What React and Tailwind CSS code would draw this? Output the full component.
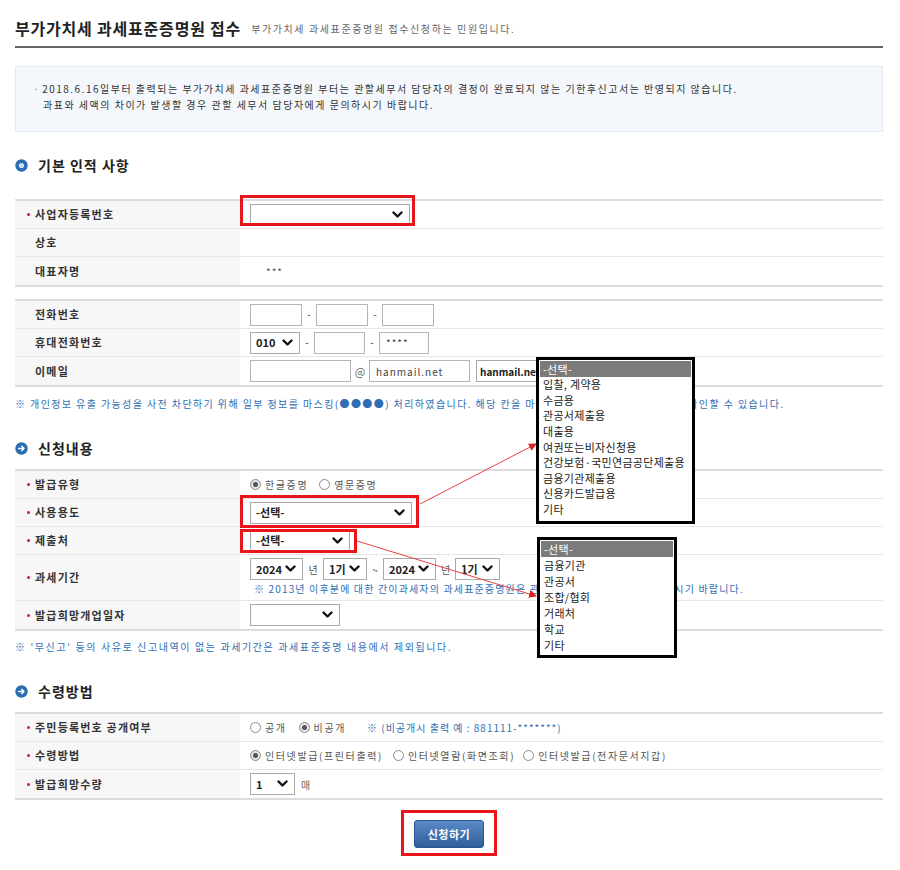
import React from "react";

const Chevron = () => (
  <svg width="11" height="8" viewBox="0 0 11 8" className="shrink-0">
    <path d="M1.5 1.5 L5.5 5.5 L9.5 1.5" fill="none" stroke="#111" strokeWidth="2.4" strokeLinecap="round" strokeLinejoin="round" />
  </svg>
);

function Select({ w, children }) {
  return (
    <div className={`${w} h-[22px] border border-[#a9a9a9] bg-white flex items-center justify-between pl-[5px] pr-[6px] shrink-0`}>
      <span className="text-[11px] font-bold text-[#222] whitespace-nowrap">{children}</span>
      <Chevron />
    </div>
  );
}

function Input({ w, children }) {
  return (
    <div className={`${w} h-[22px] border border-[#b5b5b5] bg-white flex items-center pl-[6px] shrink-0`}>
      <span className="text-[10px] text-[#444] tracking-[1px] whitespace-nowrap">{children}</span>
    </div>
  );
}

const Dash = () => <span className="w-[14px] text-center text-[11px] text-[#555] shrink-0">-</span>;

function Radio({ checked, label, gap = "mr-[8px]" }) {
  return (
    <span className={`flex items-center gap-[4px] ${gap}`}>
      <span className={`w-[11px] h-[11px] rounded-full border border-[#8a8a8a] flex items-center justify-center ${checked ? "bg-[#e6e6e6]" : "bg-white"}`}>
        {checked && <span className="w-[5px] h-[5px] rounded-full bg-[#555]" />}
      </span>
      <span className="text-[10px] text-[#555] tracking-[1.6px] whitespace-nowrap">{label}</span>
    </span>
  );
}

function Row({ label, req, children, last, tall }) {
  return (
    <div className={`flex ${tall ? "h-[46px]" : "h-[28px]"} ${last ? "" : "border-b border-[#e6e6e6]"}`}>
      <div className="w-[225px] shrink-0 bg-[#f7f7f7] flex items-center pl-[12px]">
        <span className={`w-[3px] h-[3px] rounded-full mr-[5px] ${req ? "bg-[#d9182a]" : ""}`} />
        <span className="text-[11px] font-bold text-[#333] tracking-[1.2px] whitespace-nowrap">{label}</span>
      </div>
      <div className="flex-1 flex items-center pl-[10px] bg-white">{children}</div>
    </div>
  );
}

function Table({ children, className = "" }) {
  return <div className={`border-t-2 border-b-2 border-[#dcdcdc] ${className}`}>{children}</div>;
}

function SectionTitle({ children, first }) {
  return (
    <div className="flex items-center h-[18px]">
      <svg width="13" height="13" viewBox="0 0 13 13" className="mr-[10px]">
        <circle cx="6.5" cy="6.5" r="6.2" fill="#2a6db2" />
        {first ? (
          <circle cx="6.5" cy="6.5" r="2.6" fill="#cfe0f3" />
        ) : (
          <path d="M3.5 6.5 H9 M6.8 4.3 L9 6.5 L6.8 8.7" fill="none" stroke="#fff" strokeWidth="1.4" strokeLinecap="round" strokeLinejoin="round" />
        )}
      </svg>
      <span className="text-[14px] font-bold text-[#222] tracking-[1px]">{children}</span>
    </div>
  );
}

const Note = ({ children, className = "tracking-[1.4px]" }) => (
  <div className={`text-[10px] text-[#2f6eb5] leading-[16px] whitespace-nowrap ${className}`}>{children}</div>
);

function Dropdown({ items, pos, itemH }) {
  return (
    <div className={`absolute ${pos} border-[3px] border-black bg-white overflow-hidden p-[1px]`}>
      {items.map((it, i) => (
        <div
          key={i}
          className={`${itemH} pl-[3px] flex items-center text-[11px] tracking-[0.3px] whitespace-nowrap ${i === 0 ? "bg-[#7b7b7b] text-white" : "text-[#222]"}`}
        >
          {it}
        </div>
      ))}
    </div>
  );
}

export default function App() {
  return (
    <div className="relative w-[900px] h-[870px] bg-white font-['Noto_Sans_CJK_KR','Noto_Sans',sans-serif] overflow-hidden">
      <div className="px-[15px] w-[898px]">
        {/* title */}
        <div className="pt-[18px] pb-[8px] border-b-2 border-[#666] flex items-end h-[48px]">
          <span className="text-[16px] font-bold text-[#222] tracking-[0.8px] leading-[20px]">부가가치세 과세표준증명원 접수</span>
          <span className="ml-[10px] text-[10px] text-[#666] tracking-[1.6px] leading-[18px]">부가가치세 과세표준증명원 접수신청하는 민원입니다.</span>
        </div>

        {/* info box */}
        <div className="mt-[18px] h-[66px] bg-[#f4f7fb] border border-[#e4eaf2] pl-[17px] pt-[14px]">
          <div className="text-[10px] text-[#333] tracking-[1.5px] leading-[16px] whitespace-nowrap">
            <span className="text-[#888] mr-[2px]">·</span>2018.6.16일부터 출력되는 부가가치세 과세표준증명원 부터는 관할세무서 담당자의 결정이 완료되지 않는 기한후신고서는 반영되지 않습니다.
          </div>
          <div className="text-[10px] text-[#333] tracking-[1.5px] leading-[16px] whitespace-nowrap pl-[10px]">
            과표와 세액의 차이가 발생할 경우 관할 세무서 담당자에게 문의하시기 바랍니다.
          </div>
        </div>

        {/* section 1 */}
        <div className="mt-[24px]">
          <SectionTitle first>기본 인적 사항</SectionTitle>
        </div>
        <Table className="mt-[25px]">
          <Row label="사업자등록번호" req>
            <Select w="w-[160px]"></Select>
          </Row>
          <Row label="상호"></Row>
          <Row label="대표자명" last>
            <span className="ml-[16px] text-[10px] text-[#555] tracking-[1px]">***</span>
          </Row>
        </Table>

        <Table className="mt-[12px]">
          <Row label="전화번호">
            <Input w="w-[52px]" />
            <Dash />
            <Input w="w-[52px]" />
            <Dash />
            <Input w="w-[52px]" />
          </Row>
          <Row label="휴대전화번호">
            <Select w="w-[50px]">010</Select>
            <Dash />
            <Input w="w-[51px]" />
            <Dash />
            <Input w="w-[50px]">****</Input>
          </Row>
          <Row label="이메일" last>
            <Input w="w-[101px]" />
            <span className="w-[18px] text-center text-[11px] text-[#666] shrink-0">@</span>
            <Input w="w-[101px]">hanmail.net</Input>
            <div className="ml-[6px] w-[90px] h-[22px] border border-[#a9a9a9] bg-white flex items-center pl-[3px]">
              <span className="text-[10px] font-bold text-[#222]">hanmail.net</span>
            </div>
          </Row>
        </Table>

        <Note className="mt-[9px] tracking-[1.4px]">
          ※ 개인정보 유출 가능성을 사전 차단하기 위해 일부 정보를 마스킹(●●●●) 처리하였습니다. 해당 칸을 마우스로 클릭하시면 원래 정보를 확인할 수 있습니다.
        </Note>

        {/* section 2 */}
        <div className="mt-[27px]">
          <SectionTitle>신청내용</SectionTitle>
        </div>
        <Table className="mt-[12px]">
          <Row label="발급유형" req>
            <Radio checked label="한글증명" gap="mr-[11px]" />
            <Radio label="영문증명" />
          </Row>
          <Row label="사용용도" req>
            <Select w="w-[162px]">-선택-</Select>
          </Row>
          <Row label="제출처" req>
            <Select w="w-[100px]">-선택-</Select>
          </Row>
          <Row label="과세기간" req tall>
            <div className="flex flex-col">
              <div className="flex items-center">
                <Select w="w-[53px]">2024</Select>
                <span className="w-[20px] text-center text-[10px] text-[#555]">년</span>
                <Select w="w-[44px]">1기</Select>
                <span className="w-[16px] text-center text-[10px] text-[#555]">~</span>
                <Select w="w-[53px]">2024</Select>
                <span className="w-[19px] text-center text-[10px] text-[#555]">년</span>
                <Select w="w-[45px]">1기</Select>
              </div>
              <Note className="pl-[4px] mt-[1px] tracking-[1.15px]">※ 2013년 이후분에 대한 간이과세자의 과세표준증명원은 관할 세무서 담당자에게 문의하시기 바랍니다.</Note>
            </div>
          </Row>
          <Row label="발급희망개업일자" req last>
            <Select w="w-[90px]"></Select>
          </Row>
        </Table>

        <Note className="mt-[8px] tracking-[1.6px]">※ '무신고' 등의 사유로 신고내역이 없는 과세기간은 과세표준증명 내용에서 제외됩니다.</Note>

        {/* section 3 */}
        <div className="mt-[27px]">
          <SectionTitle>수령방법</SectionTitle>
        </div>
        <Table className="mt-[12px]">
          <Row label="주민등록번호 공개여부" req>
            <Radio label="공개" gap="mr-[12px]" />
            <Radio checked label="비공개" gap="mr-[21px]" />
            <span className="text-[10px] text-[#2f6eb5] tracking-[1px] whitespace-nowrap">※ (비공개시 출력 예 : 881111-*******)</span>
          </Row>
          <Row label="수령방법" req>
            <Radio checked label="인터넷발급(프린터출력)" gap="mr-[10px]" />
            <Radio label="인터넷열람(화면조회)" gap="mr-[8px]" />
            <Radio label="인터넷발급(전자문서지갑)" />
          </Row>
          <Row label="발급희망수량" req last>
            <Select w="w-[45px]">1</Select>
            <span className="ml-[6px] text-[10px] text-[#666]">매</span>
          </Row>
        </Table>

        {/* button */}
        <div className="flex justify-center mt-[10px]">
          <div className="border-[3px] border-[#e8161b] px-[10px] pt-[7px] pb-[5px]">
            <button className="w-[70px] h-[28px] rounded-[3px] bg-gradient-to-b from-[#5b8ac6] to-[#2f5f9c] border border-[#2b5790] text-white text-[11px] font-bold tracking-[0.5px]">
              신청하기
            </button>
          </div>
        </div>
      </div>

      {/* annotation layer */}
      <div className="absolute left-[240px] top-[195px] w-[175px] h-[31px] border-[3px] border-[#e8161b]" />
      <div className="absolute left-[240px] top-[495px] w-[179px] h-[33px] border-[3px] border-[#e8161b]" />
      <div className="absolute left-[240px] top-[529px] w-[117px] h-[24px] border-[3px] border-[#e8161b]" />

      <svg className="absolute left-0 top-0 pointer-events-none" width="900" height="870">
        <defs>
          <marker id="ah" markerWidth="8" markerHeight="8" refX="7" refY="4" orient="auto" markerUnits="userSpaceOnUse">
            <path d="M0 0 L8 4 L0 8 Z" fill="#e02020" />
          </marker>
        </defs>
        <line x1="420" y1="504" x2="536" y2="444" stroke="#e84040" strokeWidth="1" markerEnd="url(#ah)" />
        <line x1="357" y1="541" x2="536" y2="596" stroke="#e84040" strokeWidth="1" markerEnd="url(#ah)" />
      </svg>

      <Dropdown
        pos="left-[536px] top-[357px] w-[159px] h-[167px]"
        itemH="h-[15.6px]"
        items={["-선택-", "입찰, 계약용", "수금용", "관공서제출용", "대출용", "여권또는비자신청용", "건강보험·국민연금공단제출용", "금융기관제출용", "신용카드발급용", "기타", " "]}
      />
      <Dropdown
        pos="left-[537px] top-[537px] w-[140px] h-[121px]"
        itemH="h-[16px]"
        items={["-선택-", "금융기관", "관공서", "조합/협회", "거래처", "학교", "기타"]}
      />
    </div>
  );
}
